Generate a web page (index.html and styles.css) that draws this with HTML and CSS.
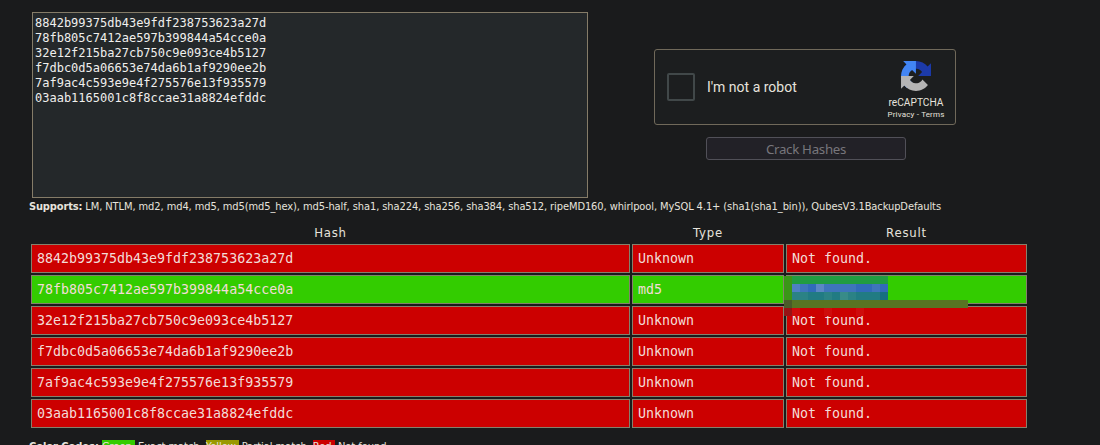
FILE: index.html
```html
<!DOCTYPE html>
<html lang="en">
<head>
<meta charset="utf-8">
<title>Hash Cracker</title>
<link rel="stylesheet" href="styles.css">
</head>
<body>
<main class="page">
  <section class="top">
    <div class="hash-input">8842b99375db43e9fdf238753623a27d
78fb805c7412ae597b399844a54cce0a
32e12f215ba27cb750c9e093ce4b5127
f7dbc0d5a06653e74da6b1af9290ee2b
7af9ac4c593e9e4f275576e13f935579
03aab1165001c8f8ccae31a8824efddc</div>
    <div class="actions">
      <div class="captcha">
        <span class="checkbox"></span>
        <span class="captcha-label">I'm not a robot</span>
        <div class="brand">
          <svg class="brand-logo" width="30" height="30" viewBox="0 0 64 64">
            <path fill="#1c3aa9" d="M64 31.955l-.033-1.37V4.687l-7.16 7.16C50.948 4.674 42.033.093 32.05.093c-10.4 0-19.622 4.96-25.458 12.64l11.736 11.86a15.55 15.55 0 0 1 4.754-5.334c2.05-1.6 4.952-2.906 8.968-2.906.485 0 .86.057 1.135.163 4.976.393 9.288 3.14 11.828 7.124l-8.307 8.307L64 31.953"/>
            <path fill="#4285f4" d="M31.862.094l-1.37.033H4.594l7.16 7.16C4.58 13.147 0 22.06 0 32.046c0 10.4 4.96 19.622 12.64 25.458L24.5 45.768a15.55 15.55 0 0 1-5.334-4.754c-1.6-2.05-2.906-4.952-2.906-8.968 0-.485.057-.86.163-1.135.393-4.976 3.14-9.288 7.124-11.828l8.307 8.307L31.86.095"/>
            <path fill="#b4b4b4" d="M.001 32.045l.033 1.37v25.898l7.16-7.16c5.86 7.173 14.774 11.754 24.76 11.754 10.4 0 19.622-4.96 25.458-12.64l-11.736-11.86a15.55 15.55 0 0 1-4.754 5.334c-2.05 1.6-4.952 2.906-8.968 2.906-.485 0-.86-.057-1.135-.163-4.976-.393-9.288-3.14-11.828-7.124l8.307-8.307c-10.522.04-22.4.066-27.295-.005"/>
          </svg>
          <span class="brand-name">reCAPTCHA</span>
          <span class="brand-links">Privacy - Terms</span>
        </div>
      </div>
      <div class="crack">Crack Hashes</div>
    </div>
  </section>
  <p class="supports"><b>Supports:</b> <span>LM, NTLM, md2, md4, md5, md5(md5_hex), md5-half, sha1, sha224, sha256, sha384, sha512, ripeMD160, whirlpool, MySQL 4.1+ (sha1(sha1_bin)), QubesV3.1BackupDefaults</span></p>
  <section class="results">
    <div class="head"><span>Hash</span></div><div class="head"><span>Type</span></div><div class="head"><span>Result</span></div>
    <div class="cell">8842b99375db43e9fdf238753623a27d</div><div class="cell">Unknown</div><div class="cell">Not found.</div>
    <div class="cell ok">78fb805c7412ae597b399844a54cce0a</div><div class="cell ok">md5</div>
    <div class="cell ok">
      <svg class="mosaic" width="184" height="40" viewBox="0 0 23 5" shape-rendering="crispEdges">
        <path fill="#3a9617" d="M0 0h1v3H0z"/>
        <path fill="#219c41" d="M1 0h12v1H1z"/>
        <path fill="#3e75bb" d="M1 1h12v1H1z"/>
        <path fill="#4e80c4" d="M1 1h1v1H1z"/>
        <path fill="#5a87c4" d="M4 1h1v1H4z"/>
        <path fill="#316bb9" d="M3 1h1v1H3zM9 1h2v1H9zM12 1h1v1h-1z"/>
        <path fill="#217b83" d="M1 2h12v1H1z"/>
        <path fill="#2b8285" d="M1 2h2v1H1zM5 2h1v1H5zM8 2h1v1H8z"/>
        <path fill="#388b88" d="M7 2h1v1H7z"/>
        <path fill="#166f80" d="M12 2h1v1h-1z"/>
        <path fill="#587423" d="M0 3h23v1H0z"/>
        <path fill="#4a5b29" d="M0 3h1v1H0z"/>
        <path fill="#cc0000" d="M1 4h12v1H1z"/>
        <path fill="#971316" d="M0 4h1v1H0z"/>
        <path fill="#cf0c0c" d="M1 4h1v1H1zM5 4h1v1H5zM9 4h1v1H9z"/>
      </svg>
    </div>
    <div class="cell">32e12f215ba27cb750c9e093ce4b5127</div><div class="cell">Unknown</div><div class="cell">Not found.</div>
    <div class="cell">f7dbc0d5a06653e74da6b1af9290ee2b</div><div class="cell">Unknown</div><div class="cell">Not found.</div>
    <div class="cell">7af9ac4c593e9e4f275576e13f935579</div><div class="cell">Unknown</div><div class="cell">Not found.</div>
    <div class="cell">03aab1165001c8f8ccae31a8824efddc</div><div class="cell">Unknown</div><div class="cell">Not found.</div>
  </section>
  <p class="legend"><b>Color Codes:</b> <span class="tag green">Green:</span> <span>Exact match,</span> <span class="tag yellow">Yellow:</span> <span>Partial match,</span> <span class="tag red">Red:</span> <span>Not found.</span></p>
</main>
</body>
</html>
```
FILE: styles.css
```css
* { box-sizing: border-box; }
body { margin: 0; background: #1a1b1c; overflow: hidden; }
.page { height: 445px; overflow: hidden; padding: 12px 0 0 29px; color: #e6e3dd; font-family: "DejaVu Sans Condensed", "DejaVu Sans", sans-serif; }
.top { display: flex; height: 186px; padding-left: 3px; }
.hash-input { width: 556px; height: 186px; border: 1px solid #857c68; background: #24282a; color: #f0efed; padding: 3px 2px 2px; font: 12px/15px "DejaVu Sans Mono", monospace; white-space: pre; }
.actions { display: flex; flex-direction: column; align-items: center; margin-left: 66px; padding-top: 37px; width: 302px; }
.captcha { display: flex; align-items: center; width: 302px; height: 76px; padding-left: 12px; border: 1px solid #70695a; border-radius: 3px; background: #1c1e1f; font-family: Roboto, sans-serif; }
.checkbox { width: 28px; height: 28px; border: 2px solid #414849; border-radius: 2px; }
.captcha-label { margin-left: 12px; font-size: 14px; line-height: 18px; width: 150px; }
.brand { display: flex; flex-direction: column; align-items: center; width: 70px; margin-left: 24px; }
.brand-logo { margin-top: 6px; }
.brand-name { margin-top: 6px; font-size: 10.2px; line-height: 12px; }
.brand-links { margin-top: 1px; font-size: 8px; line-height: 10px; letter-spacing: .18px; white-space: nowrap; }
.crack { width: 200px; height: 23px; margin: 12px 0 0 2px; border: 1px solid #515058; border-radius: 3px; background: #222127; color: #77767c; text-align: center; font: 13.3px/22px "Noto Sans", sans-serif; letter-spacing: -.3px; }
.supports { margin: 0; height: 26px; padding-top: 1px; font-size: 11px; line-height: 16px; letter-spacing: -.088px; white-space: nowrap; }
.supports b { letter-spacing: -.15px; }
.results { display: grid; grid-template-columns: 599px 152px 241px; grid-template-rows: 18px; grid-auto-rows: 29px; gap: 2px; padding-left: 2px; }
.head { text-align: center; font-size: 13px; line-height: 18px; letter-spacing: .8px; }
.cell { position: relative; border: 1px solid #85806c; background: #c00; color: #f3dcd8; padding-left: 5px; font: 13.3px/27px "DejaVu Sans Mono", monospace; }
.ok { background: #3c0; z-index: 1; }
.mosaic { position: absolute; left: -3px; top: 0; }
.legend { margin: 11px 0 0; font-size: 11px; line-height: 15px; letter-spacing: -.04px; white-space: nowrap; }
.green { background: #3c0; }
.yellow { background: #990; }
.red { background: #c00; }
```
